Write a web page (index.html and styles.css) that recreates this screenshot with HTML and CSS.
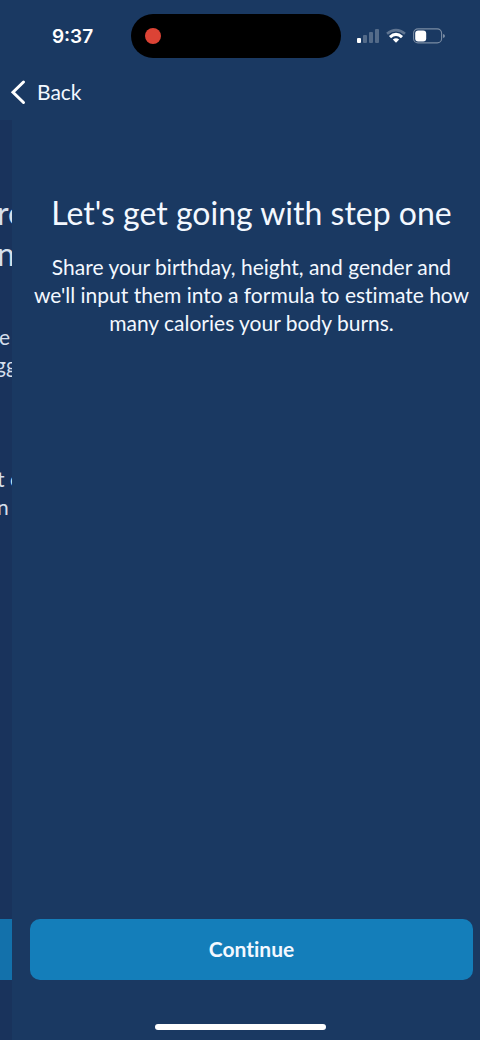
FILE: index.html
```html
<!DOCTYPE html>
<html lang="en">
<head>
<meta charset="utf-8">
<meta name="viewport" content="width=device-width, initial-scale=1">
<title>Step one</title>
<link rel="stylesheet" href="styles.css">
</head>
<body>
<div class="screen">
  <header class="top">
    <div class="status">
      <span class="time">9:37</span>
      <div class="island"><span class="record"></span></div>
      <svg class="indicators" width="90" height="20" viewBox="0 0 90 20" aria-hidden="true">
        <g fill="#fff">
          <rect x="1" y="12" width="4" height="5" rx="1"/>
          <g opacity=".25">
            <rect x="7" y="9" width="4" height="8" rx="1"/>
            <rect x="13" y="6" width="4" height="11" rx="1"/>
            <rect x="19" y="3" width="4" height="14" rx="1"/>
          </g>
        </g>
        <g fill="none" stroke="#fff" stroke-width="2.6">
          <path d="M31 7.8Q40 .4 49 7.8" opacity=".3"/>
          <path d="M34 11.2Q40 5.6 46 11.2" stroke-width="3"/>
        </g>
        <path d="M36.8 13.6Q40 11 43.2 13.6L40 16.8Z" fill="#fff"/>
        <rect x="57.6" y="2.9" width="28" height="14" rx="4.4" fill="none" stroke="#fff" stroke-opacity=".42" stroke-width="1.1"/>
        <rect x="59.2" y="4.4" width="11" height="11" rx="3" fill="#fff"/>
        <path d="M87 8Q89 8.6 89 10T87 12Z" fill="#fff" opacity=".42"/>
      </svg>
    </div>
    <nav class="nav">
      <button class="back" type="button">
        <svg width="16" height="26" viewBox="0 0 16 26" aria-hidden="true"><path d="M13.5 3L3 13.2L13.5 23.5" fill="none" stroke="#fff" stroke-width="3" stroke-linecap="round"/></svg>
        <span>Back</span>
      </button>
    </nav>
  </header>
  <div class="stage">
    <aside class="previous" aria-hidden="true">
      <div class="previous-title">re<br>n</div>
      <div class="previous-text">e<br><span class="cut">gg</span></div>
      <div class="previous-text previous-last">t c<br>n</div>
      <div class="previous-action"></div>
    </aside>
    <main class="step">
      <h1>Let's get going with step one</h1>
      <p>Share your birthday, height, and gender and<br>we'll input them into a formula to estimate how<br>many calories your body burns.</p>
      <button class="continue" type="button">Continue</button>
    </main>
  </div>
  <div class="home"></div>
</div>
</body>
</html>
```
FILE: styles.css
```css
* { box-sizing: border-box; }

body {
  margin: 0;
  background: #1a3962;
  color: #f3f8ff;
  font-family: Lato, "Noto Sans", sans-serif;
  font-variant-ligatures: none;
}

button {
  border: 0;
  color: inherit;
  font-family: inherit;
  font-variant-ligatures: none;
  cursor: pointer;
}

.screen {
  position: relative;
  display: flex;
  flex-direction: column;
  min-height: 100vh;
  overflow: hidden;
}

.top { height: 120px; }

.status {
  display: grid;
  grid-template-columns: 1fr 210px 1fr;
  align-items: center;
  height: 72px;
  padding-right: 8px;
}

.time {
  padding: 2px 0 0 14px;
  color: #fff;
  font: 600 19px/24px Inter, sans-serif;
  text-align: center;
}

.island {
  display: flex;
  align-items: center;
  height: 44px;
  padding-left: 14px;
  border-radius: 22px;
  background: #000;
}

.record {
  width: 16px;
  height: 16px;
  border-radius: 50%;
  background: #dc4335;
}

.indicators { margin-left: 15px; }

.nav {
  display: flex;
  align-items: center;
  height: 40px;
  padding-left: 10px;
}

.back {
  display: flex;
  align-items: center;
  gap: 11px;
  padding: 0;
  background: none;
  font-size: 21px;
  line-height: 28px;
}

.stage {
  display: grid;
  grid-template-columns: 12px minmax(0, 1fr);
  flex: 1;
}

.previous {
  display: flex;
  flex-direction: column;
  overflow: hidden;
  padding: 72px 0 60px;
  background: #19335c;
  color: #d5dfeb;
  white-space: nowrap;
}

.previous-title {
  margin-left: -3px;
  font-size: 32px;
  line-height: 41px;
}

.previous-text {
  margin-top: 49px;
  margin-left: -1px;
  font-size: 21px;
  line-height: 28px;
}

.previous-last {
  margin-top: 86px;
  margin-left: -3px;
}

.cut { margin-left: -4px; }

.previous-action {
  height: 61px;
  margin-top: auto;
  background: #1371ab;
}

.step {
  display: flex;
  flex-direction: column;
  padding: 72px 7px 60px 18px;
  text-align: center;
}

h1 {
  margin: 0;
  font-size: 32px;
  font-weight: 400;
  line-height: 41px;
  white-space: nowrap;
}

p {
  margin: 20px 0 0;
  font-size: 21px;
  line-height: 28px;
  white-space: nowrap;
}

.continue {
  height: 61px;
  margin-top: auto;
  padding: 0 0 2px;
  border-radius: 10px;
  background: #147eba;
  font-size: 21px;
  font-weight: 700;
}

.home {
  position: absolute;
  bottom: 10px;
  left: 50%;
  width: 171px;
  height: 6px;
  margin-left: -85px;
  border-radius: 3px;
  background: #fff;
}
```
